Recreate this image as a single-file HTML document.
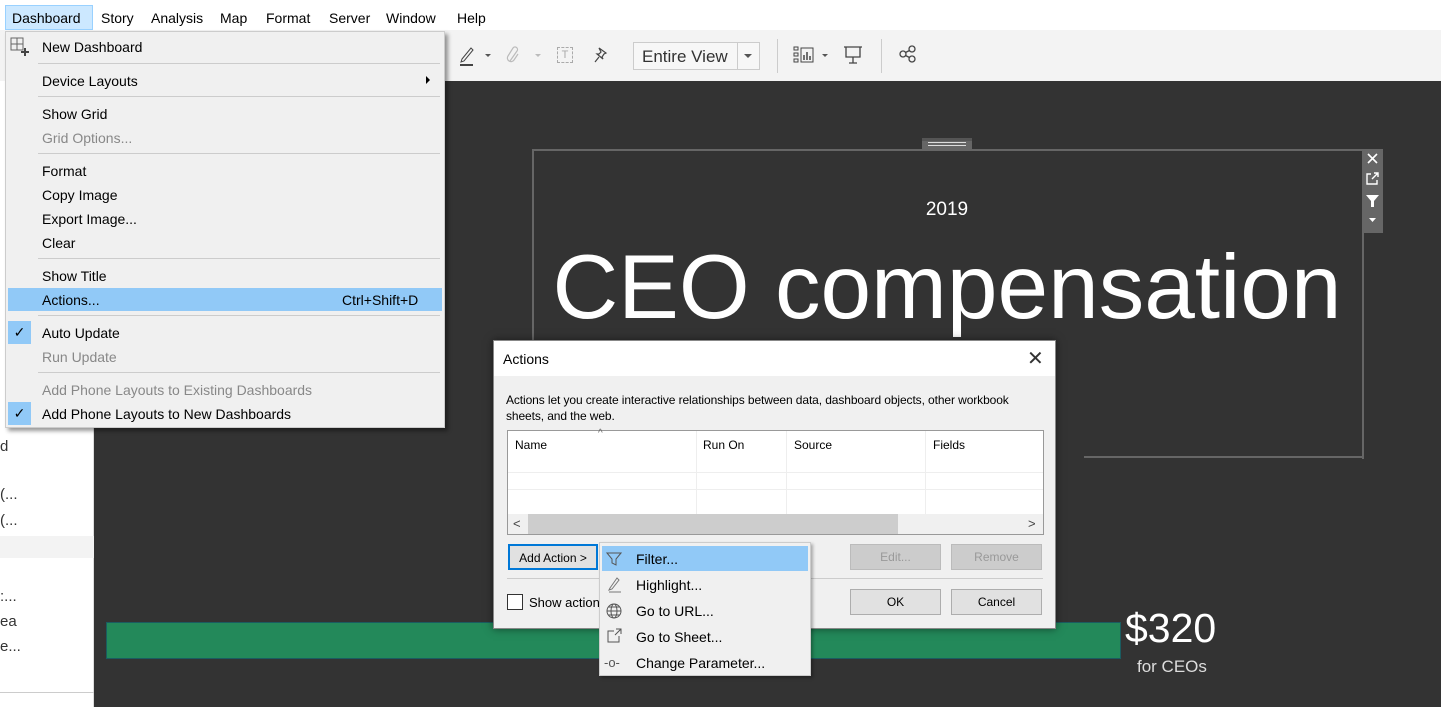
<!DOCTYPE html>
<html><head><meta charset="utf-8"><style>
*{margin:0;padding:0;box-sizing:border-box}
body{width:1441px;height:707px;overflow:hidden;position:relative;font-family:"Liberation Sans",sans-serif;background:#333;color:#000}
.abs{position:absolute}
.mb span{position:absolute;top:10px;font-size:14px}
.menu div.it{position:absolute;left:36px;font-size:14px}
.sep{position:absolute;left:32px;right:4px;height:1px;background:#ccc}
.btn{position:absolute;border:1px solid #adadad;background:#e1e1e1;font-size:12px;text-align:center;line-height:24px}
.sub div.s{position:absolute;left:36px;font-size:14px}
</style></head><body>
<div class="abs mb" style="left:0;top:0;width:1441px;height:30px;background:#fff">
<div class="abs" style="left:5px;top:5px;width:88px;height:25px;background:#cce8ff;border:1px solid #99d1ff"></div>
<span style="left:12px">Dashboard</span><span style="left:101px">Story</span><span style="left:151px">Analysis</span><span style="left:220px">Map</span><span style="left:266px">Format</span><span style="left:329px">Server</span><span style="left:386px">Window</span><span style="left:457px">Help</span>
</div>
<div class="abs" style="left:0;top:30px;width:1441px;height:51px;background:#f3f3f3"></div>
<div class="abs" style="left:633px;top:42px;width:127px;height:28px;border:1px solid #ccc;background:#f7f7f7;font-size:17px;color:#333;padding:4px 8px">Entire View</div>
<div class="abs" style="left:737px;top:43px;width:1px;height:26px;background:#ccc"></div>
<div class="abs" style="left:744px;top:54px;border:4px solid transparent;border-top:4px solid #555"></div>
<div class="abs" style="left:777px;top:39px;width:1px;height:34px;background:#ccc"></div>
<div class="abs" style="left:881px;top:39px;width:1px;height:34px;background:#ccc"></div>
<svg class="abs" style="left:459px;top:45px" width="16" height="22"><path d="M3 14L12 3L14 5L5 16L2 17Z" fill="none" stroke="#444"/><path d="M1 20H14" stroke="#444" stroke-width="2"/></svg>
<div class="abs" style="left:485px;top:54px;border:3px solid transparent;border-top:3px solid #555"></div>
<svg class="abs" style="left:506px;top:45px" width="14" height="20"><path d="M4 16L11 6A2.5 2.5 0 0 0 7 3L2 11A3.5 3.5 0 0 0 8 15L12 9" fill="none" stroke="#bbb" stroke-width="1.2"/></svg>
<div class="abs" style="left:535px;top:54px;border:3px solid transparent;border-top:3px solid #bbb"></div>
<div class="abs" style="left:557px;top:47px;width:16px;height:16px;border:1px dashed #aaa;font-size:11px;color:#aaa;text-align:center;line-height:14px">T</div>
<svg class="abs" style="left:593px;top:46px" width="16" height="18"><path d="M6 2L13 7L11 8L9 11L10 13L4 8L6 8L8 6Z M6 11L2 16" fill="none" stroke="#444" stroke-width="1.2"/></svg>
<svg class="abs" style="left:793px;top:46px" width="22" height="18"><rect x="1" y="1" width="4" height="3" fill="none" stroke="#444"/><rect x="1" y="7" width="4" height="3" fill="none" stroke="#444"/><rect x="1" y="13" width="4" height="3" fill="none" stroke="#444"/><rect x="8" y="2" width="12" height="14" fill="none" stroke="#444"/><path d="M11 14V9M14 14V6M17 14V10" stroke="#444" stroke-width="1.5"/></svg>
<div class="abs" style="left:822px;top:54px;border:3px solid transparent;border-top:3px solid #555"></div>
<svg class="abs" style="left:843px;top:45px" width="20" height="20"><path d="M1 2H19M3 2V12H17V2M10 12V18M6 18H14" stroke="#444" fill="none" stroke-width="1.3"/></svg>
<svg class="abs" style="left:899px;top:45px" width="18" height="18"><circle cx="4" cy="9" r="3" fill="none" stroke="#444" stroke-width="1.3"/><circle cx="13" cy="4" r="3" fill="none" stroke="#444" stroke-width="1.3"/><circle cx="13" cy="14" r="3" fill="none" stroke="#444" stroke-width="1.3"/><path d="M6.5 7.5L10.5 5.5M6.5 10.5L10.5 12.5" stroke="#444" stroke-width="1.3"/></svg>
<div class="abs" style="left:0;top:81px;width:94px;height:626px;background:#fff;border-right:1px solid #ddd;font-size:15px;color:#333">
<div class="abs" style="left:0;top:455px;width:94px;height:22px;background:#f3f3f3"></div>
<div class="abs" style="left:0;top:357px">d</div>
<div class="abs" style="left:0;top:405px">(...</div>
<div class="abs" style="left:0;top:431px">(...</div>
<div class="abs" style="left:0;top:507px">:...</div>
<div class="abs" style="left:0;top:532px">ea</div>
<div class="abs" style="left:0;top:557px">e...</div>
<div class="abs" style="left:0;top:611px;width:94px;height:1px;background:#ccc"></div>
</div>
<div class="abs" style="left:532px;top:149px;width:832px;height:310px;border:2px solid #666;border-right:0;border-bottom:0"></div>
<div class="abs" style="left:1362px;top:149px;width:2px;height:310px;background:#666"></div>
<div class="abs" style="left:1084px;top:456px;width:280px;height:2px;background:#666"></div>
<div class="abs" style="left:922px;top:138px;width:50px;height:11px;background:#666;border-top:3px solid #555"></div>
<div class="abs" style="left:928px;top:142px;width:38px;height:1px;background:#ddd"></div><div class="abs" style="left:928px;top:145px;width:38px;height:1px;background:#ddd"></div>
<div class="abs" style="left:1362px;top:149px;width:21px;height:84px;background:#666"></div>
<svg class="abs" style="left:1362px;top:149px" width="21" height="84"><path d="M6 5L15 14M15 5L6 14" stroke="#fff" stroke-width="1.6"/><path d="M9 25H5V35H15V31M10 30L16 24M12 24H16V28" stroke="#fff" fill="none" stroke-width="1.4"/><path d="M4 46H17L12 52V58H9V52Z" fill="#fff"/><path d="M7 69H14L10.5 73Z" fill="#fff"/></svg>
<div class="abs" style="left:532px;top:199px;width:830px;text-align:center;color:#fff;font-size:19px">2019</div>
<div class="abs" style="left:500px;top:238px;width:894px;text-align:center;color:#fff;font-size:91px;line-height:100px;white-space:nowrap">CEO compensation</div>
<div class="abs" style="left:106px;top:622px;width:1015px;height:37px;background:#23895a;border:1px solid #1a5c60"></div>
<div class="abs" style="left:1125px;top:605px;color:#fff;font-size:41px">$320</div>
<div class="abs" style="left:1137px;top:657px;color:#ddd;font-size:17px">for CEOs</div>
<div class="abs menu" style="left:5px;top:31px;width:440px;height:397px;background:#f0f0f0;border:1px solid #ccc;box-shadow:3px 3px 4px rgba(0,0,0,.4)">
<svg class="abs" style="left:4px;top:5px" width="20" height="20"><rect x="1" y="1" width="12" height="12" fill="none" stroke="#666"/><path d="M7 1V13M1 7H13" stroke="#666"/><path d="M15 11V19M11 15H19" stroke="#444" stroke-width="2"/></svg>
<div class="it" style="top:7px">New Dashboard</div>
<div class="sep" style="top:31px"></div>
<div class="it" style="top:41px">Device Layouts</div>
<div class="abs" style="left:420px;top:44px;border:4px solid transparent;border-left:4px solid #000"></div>
<div class="sep" style="top:64px"></div>
<div class="it" style="top:74px">Show Grid</div>
<div class="it" style="top:98px;color:#888">Grid Options...</div>
<div class="sep" style="top:121px"></div>
<div class="it" style="top:131px">Format</div>
<div class="it" style="top:155px">Copy Image</div>
<div class="it" style="top:179px">Export Image...</div>
<div class="it" style="top:203px">Clear</div>
<div class="sep" style="top:226px"></div>
<div class="it" style="top:236px">Show Title</div>
<div class="abs" style="left:2px;top:256px;width:434px;height:23px;background:#91c9f7"></div>
<div class="it" style="top:260px">Actions...</div>
<div class="abs" style="left:336px;top:260px;font-size:14px">Ctrl+Shift+D</div>
<div class="sep" style="top:283px"></div>
<div class="abs" style="left:2px;top:289px;width:23px;height:23px;background:#91c9f7;text-align:center;font-size:14px;line-height:23px">✓</div>
<div class="it" style="top:293px">Auto Update</div>
<div class="it" style="top:317px;color:#888">Run Update</div>
<div class="sep" style="top:340px"></div>
<div class="it" style="top:350px;color:#888">Add Phone Layouts to Existing Dashboards</div>
<div class="abs" style="left:2px;top:370px;width:23px;height:23px;background:#91c9f7;text-align:center;font-size:14px;line-height:23px">✓</div>
<div class="it" style="top:374px">Add Phone Layouts to New Dashboards</div>
</div>
<div class="abs" style="left:493px;top:340px;width:563px;height:289px;background:#f0f0f0;border:1px solid #888;box-shadow:0 0 8px rgba(0,0,0,.5)">
<div class="abs" style="left:0;top:0;width:561px;height:35px;background:#fff"></div>
<div class="abs" style="left:9px;top:10px;font-size:14px">Actions</div>
<div class="abs" style="left:533px;top:5px;font-size:20px;color:#333">✕</div>
<div class="abs" style="left:12px;top:51px;font-size:12px;line-height:16px;width:525px;letter-spacing:-0.1px">Actions let you create interactive relationships between data, dashboard objects, other workbook sheets, and the web.</div>
<div class="abs" style="left:13px;top:89px;width:537px;height:105px;background:#fff;border:1px solid #999;font-size:12px">
<div class="abs" style="left:7px;top:7px">Name</div><div class="abs" style="left:195px;top:7px">Run On</div><div class="abs" style="left:286px;top:7px">Source</div><div class="abs" style="left:425px;top:7px">Fields</div>
<div class="abs" style="left:90px;top:-3px;font-size:10px;color:#666">^</div>
<div class="abs" style="left:188px;top:0;width:1px;height:83px;background:#eee"></div>
<div class="abs" style="left:278px;top:0;width:1px;height:83px;background:#eee"></div>
<div class="abs" style="left:417px;top:0;width:1px;height:83px;background:#eee"></div>
<div class="abs" style="left:0;top:41px;width:535px;height:1px;background:#eee"></div>
<div class="abs" style="left:0;top:58px;width:535px;height:1px;background:#eee"></div>
<div class="abs" style="left:0;top:83px;width:535px;height:20px;background:#f0f0f0"></div>
<div class="abs" style="left:20px;top:83px;width:370px;height:20px;background:#cdcdcd"></div>
<div class="abs" style="left:5px;top:85px;font-size:13px;color:#444">&lt;</div>
<div class="abs" style="left:520px;top:85px;font-size:13px;color:#444">&gt;</div>
</div>
<div class="btn" style="left:14px;top:203px;width:90px;height:26px;border:2px solid #0078d7">Add Action &gt;</div>
<div class="btn" style="left:356px;top:203px;width:91px;height:26px;color:#999;background:#ccc;border-color:#bbb">Edit...</div>
<div class="btn" style="left:457px;top:203px;width:91px;height:26px;color:#999;background:#ccc;border-color:#bbb">Remove</div>
<div class="abs" style="left:13px;top:237px;width:536px;height:1px;background:#ccc"></div>
<div class="abs" style="left:13px;top:253px;width:16px;height:16px;border:1px solid #333;background:#fff"></div>
<div class="abs" style="left:35px;top:254px;font-size:13px">Show action</div>
<div class="btn" style="left:356px;top:248px;width:91px;height:26px">OK</div>
<div class="btn" style="left:457px;top:248px;width:91px;height:26px">Cancel</div>
</div>
<div class="abs sub" style="left:599px;top:542px;width:212px;height:134px;background:#f0f0f0;border:1px solid #ccc;box-shadow:2px 2px 3px rgba(0,0,0,.3)">
<div class="abs" style="left:2px;top:3px;width:206px;height:25px;background:#91c9f7"></div>
<div class="s" style="top:8px">Filter...</div>
<div class="s" style="top:34px">Highlight...</div>
<div class="s" style="top:60px">Go to URL...</div>
<div class="s" style="top:86px">Go to Sheet...</div>
<div class="s" style="top:112px">Change Parameter...</div>
<svg class="abs" style="left:6px;top:8px" width="16" height="16"><path d="M1 2H15L10 8V14L6 12V8Z" fill="none" stroke="#555"/></svg>
<svg class="abs" style="left:7px;top:33px" width="16" height="18"><path d="M3 12L10 2L12 4L5 13L2 14Z" fill="none" stroke="#777"/><path d="M2 16H14" stroke="#777"/></svg>
<svg class="abs" style="left:5px;top:59px" width="18" height="18"><circle cx="9" cy="9" r="7" fill="none" stroke="#555"/><ellipse cx="9" cy="9" rx="3" ry="7" fill="none" stroke="#555"/><path d="M2 9H16M3 5H15M3 13H15" stroke="#555"/></svg>
<svg class="abs" style="left:6px;top:85px" width="16" height="16"><path d="M8 3H2V14H13V8M9 7L15 1M10 1H15V6" fill="none" stroke="#555"/></svg>
<div class="abs" style="left:4px;top:112px;font-size:13px;color:#555">-o-</div>
</div>
</body></html>
